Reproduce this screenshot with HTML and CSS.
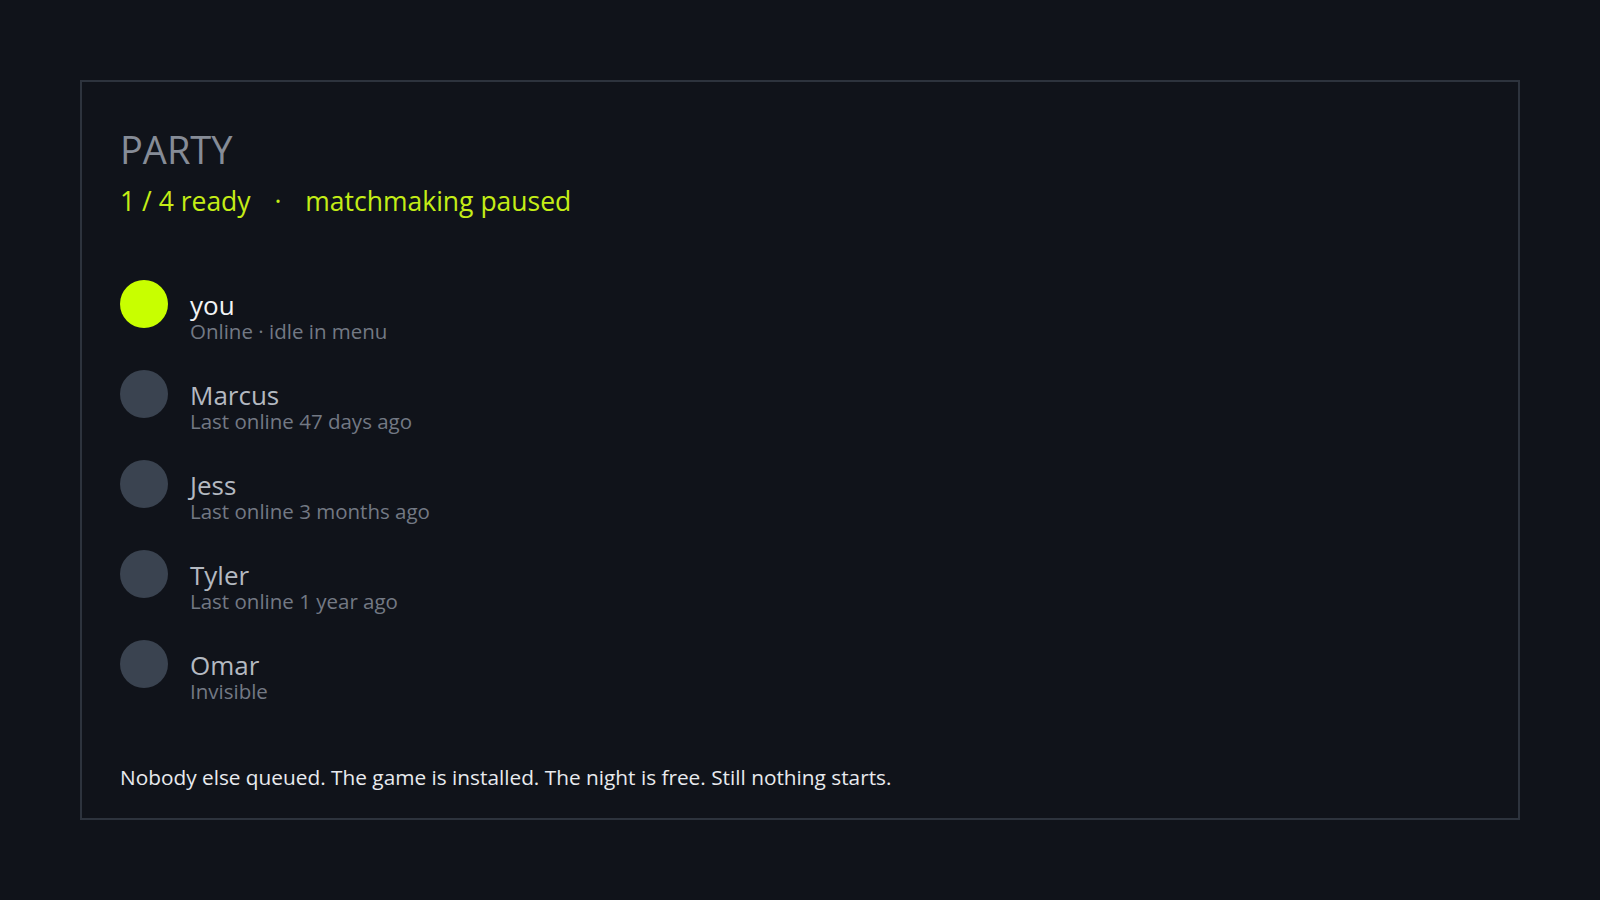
FILE: index.html
```html
<!DOCTYPE html>
<html lang="en">
<head>
<meta charset="utf-8">
<title>Party</title>
<link rel="stylesheet" href="styles.css">
</head>
<body>
<main class="panel">
  <header class="head">
    <h1 class="title">PARTY</h1>
    <p class="status">1 / 4 ready <span class="sep">·</span> matchmaking paused</p>
  </header>
  <ul class="members">
    <li class="member member--self">
      <span class="avatar"></span>
      <div class="info">
        <span class="name">you</span>
        <span class="detail">Online · idle in menu</span>
      </div>
    </li>
    <li class="member">
      <span class="avatar"></span>
      <div class="info">
        <span class="name">Marcus</span>
        <span class="detail">Last online 47 days ago</span>
      </div>
    </li>
    <li class="member">
      <span class="avatar"></span>
      <div class="info">
        <span class="name">Jess</span>
        <span class="detail">Last online 3 months ago</span>
      </div>
    </li>
    <li class="member">
      <span class="avatar"></span>
      <div class="info">
        <span class="name">Tyler</span>
        <span class="detail">Last online 1 year ago</span>
      </div>
    </li>
    <li class="member">
      <span class="avatar"></span>
      <div class="info">
        <span class="name">Omar</span>
        <span class="detail">Invisible</span>
      </div>
    </li>
  </ul>
  <p class="note">Nobody else queued. The game is installed. The night is free. Still nothing starts.</p>
</main>
</body>
</html>
```

FILE: styles.css
```css
html, body {
  margin: 0;
  height: 100%;
  background: #10131a;
}

body {
  padding: 80px;
  box-sizing: border-box;
  font-family: "Segoe UI", "Open Sans", "Noto Sans", sans-serif;
}

.panel {
  height: 740px;
  box-sizing: border-box;
  border: 2px solid #2d333d;
  padding: 38px 38px 0;
}

.head {
  margin-top: 5px;
}

.title {
  margin: 0;
  font-size: 38px;
  line-height: 48px;
  font-weight: 400;
  color: #868c97;
}

.status {
  margin: 8px 0 0;
  font-size: 26.5px;
  line-height: 40px;
  color: #c4ed16;
}

.sep {
  margin: 0 17px;
}

.members {
  list-style: none;
  margin: 59px 0 0;
  padding: 0;
  display: flex;
  flex-direction: column;
  gap: 42px;
}

.member {
  display: flex;
  align-items: flex-start;
  gap: 22px;
  height: 48px;
}

.avatar {
  flex: none;
  width: 48px;
  height: 48px;
  border-radius: 50%;
  background: #3a4350;
}

.member--self .avatar {
  background: #c8ff00;
}

.info {
  display: flex;
  flex-direction: column;
  margin-top: 11px;
}

.name {
  font-size: 26px;
  line-height: 28px;
  color: #b4b9c1;
}

.member--self .name {
  color: #f2f3f5;
}

.detail {
  font-size: 20.5px;
  line-height: 24px;
  color: #737984;
}

.note {
  margin: 75px 0 0;
  font-size: 20.8px;
  line-height: 28px;
  color: #e8eaee;
}
```
